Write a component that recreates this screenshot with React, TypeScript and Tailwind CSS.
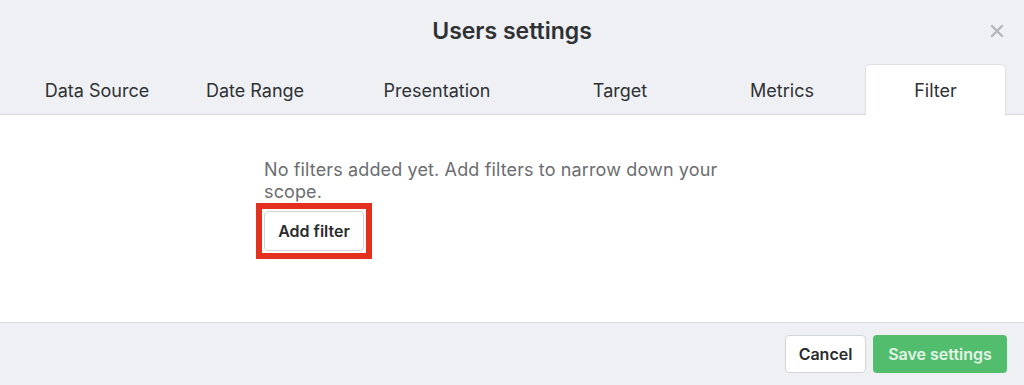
import React from "react";

const tabs = [
  { label: "Data Source", w: "w-[160px]" },
  { label: "Date Range", w: "w-[156px]" },
  { label: "Presentation", w: "w-[208px]" },
  { label: "Target", w: "w-[158px]" },
  { label: "Metrics", w: "w-[166px]" },
];

export default function App() {
  return (
    <div
      className="w-[1024px] h-[385px] flex flex-col bg-[#eef0f4] text-[#2f3133] overflow-hidden"
      style={{ fontFamily: "Inter, 'Noto Sans', sans-serif" }}
    >
      {/* Header */}
      <div className="relative h-[64px] flex items-center justify-center pb-[2px]">
        <h1 className="text-[23px] font-semibold text-[#2f3133]">Users settings</h1>
        <button className="absolute right-[20px] top-[24px] w-[14px] h-[14px] flex items-center justify-center">
          <svg width="14" height="14" viewBox="0 0 14 14">
            <path d="M2 2 L12 12 M12 2 L2 12" stroke="#b3b6ba" strokeWidth="2.4" strokeLinecap="round" />
          </svg>
        </button>
      </div>

      {/* Tabs */}
      <div className="h-[51px] flex items-end pl-[17px] border-b border-[#d6d9dd]">
        {tabs.map((t) => (
          <div key={t.label} className={`${t.w} h-[50px] pt-[2px] flex items-center justify-center text-[18px] text-[#2f3133]`}>
            {t.label}
          </div>
        ))}
        <div className="w-[141px] h-[51px] -mb-px pt-[1px] flex items-center justify-center text-[18px] text-[#2f3133] bg-white border border-b-0 border-[#dcdfe3] rounded-t-[5px]">
          Filter
        </div>
      </div>

      {/* Content */}
      <div className="h-[207px] bg-white flex justify-center">
        <div className="w-[496px] pt-[44px] flex flex-col items-start">
          <p className="text-[18px] leading-[22px] tracking-[0.13px] text-[#6b6d70]">
            No filters added yet. Add filters to narrow down your scope.
          </p>
          <div className="-ml-[8px] border-[6px] border-[#e3301f] p-[2px]">
            <button className="w-[100px] h-[40px] bg-white border border-[#d2d5d9] rounded-[4px] text-[16px] font-semibold text-[#2a2b2d]">
              Add filter
            </button>
          </div>
        </div>
      </div>

      {/* Footer */}
      <div className="flex-1 border-t border-[#d6d9dd] flex items-start justify-end gap-[7px] pr-[17px] pt-[12px]">
        <button className="w-[81px] h-[38px] bg-white border border-[#d2d5d9] rounded-[4px] text-[16px] font-semibold text-[#2a2b2d]">
          Cancel
        </button>
        <button className="w-[134px] h-[38px] bg-[#52bd6d] rounded-[4px] text-[16px] font-semibold text-[#e3f5e8]">
          Save settings
        </button>
      </div>
    </div>
  );
}
